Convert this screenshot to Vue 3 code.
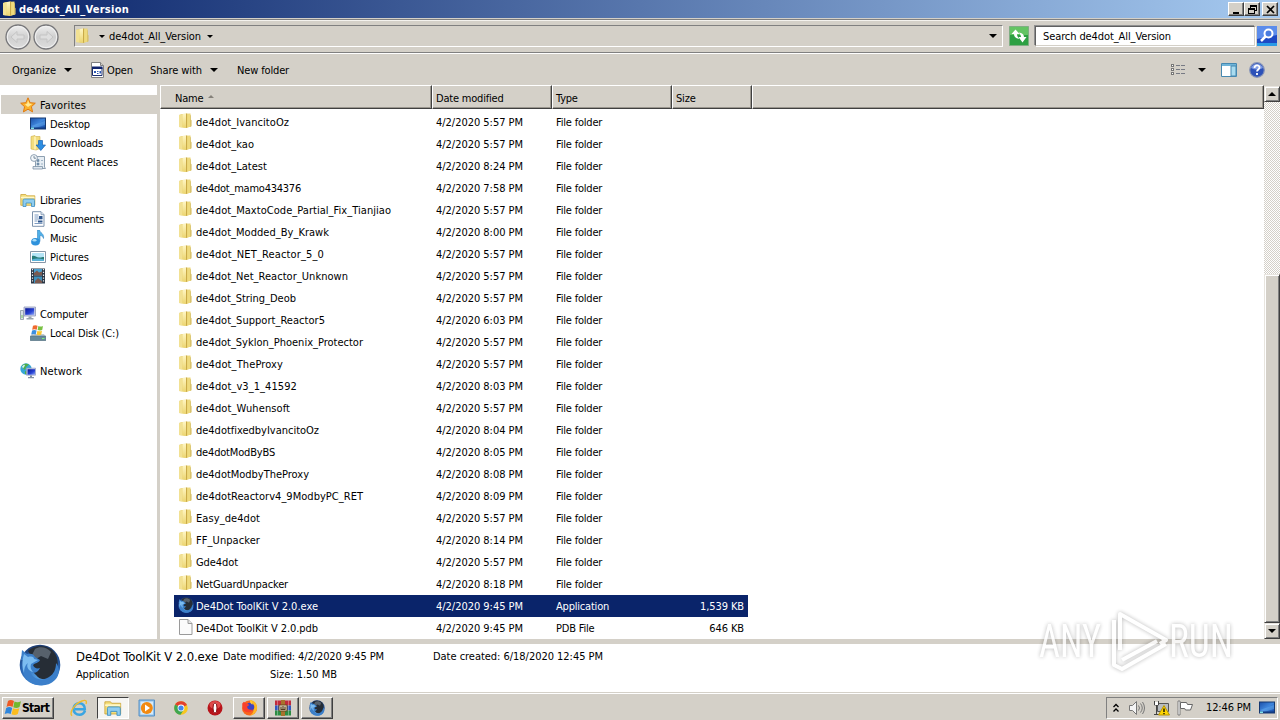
<template>
  <svg class="sprite" width="0" height="0">
    <defs>
      <linearGradient id="gBlue" x1="0" y1="0" x2="1" y2="1">
        <stop offset="0" stop-color="#1b4fa8" />
        <stop offset="0.5" stop-color="#3f86dc" />
        <stop offset="1" stop-color="#0d3f9c" />
      </linearGradient>
      <linearGradient id="gScreen" x1="0" y1="0" x2="1" y2="1">
        <stop offset="0" stop-color="#0a1590" />
        <stop offset="0.6" stop-color="#2743d6" />
        <stop offset="1" stop-color="#8ea6f4" />
      </linearGradient>
      <linearGradient id="gNav" x1="0" y1="0" x2="0" y2="1">
        <stop offset="0" stop-color="#f0f0f0" />
        <stop offset="0.5" stop-color="#cfcfcf" />
        <stop offset="1" stop-color="#dedede" />
      </linearGradient>
      <linearGradient id="gLeaf" x1="0" y1="0" x2="0" y2="1">
        <stop offset="0" stop-color="#fff6c4" />
        <stop offset="1" stop-color="#ecd570" />
      </linearGradient>
      <radialGradient id="gFox" cx="0.5" cy="0.8" r="0.8">
        <stop offset="0" stop-color="#5aa5e6" />
        <stop offset="0.6" stop-color="#2a66b4" />
        <stop offset="1" stop-color="#1b3a70" />
      </radialGradient>
    </defs>
    <symbol id="folder" viewBox="0 0 16 16">
      <path d="M1 2l3-1 8.500-.5 .5 13-5 1.500-7-1z" fill="#e8d271" />
      <path d="M1 2l3.500-.8v13.300l-3.500-.6z" fill="#f2e193" />
      <path d="M4.500 1.200l3.500-.6v14.200l-3.500-.6z" fill="url(#gLeaf)" />
      <path d="M8 .6l1.200 0v14l-1.200.4z" fill="#c9aa48" />
      <path d="M9.200 1h2.800v12.500l-2.800 1.100z" fill="#efda7c" />
      <path d="M12 2l.8.5v4l.8.700v6l-1.600.8z" fill="#d9c26b" />
    </symbol>
    <symbol id="star" viewBox="0 0 16 16">
      <path d="M8 .8l2.100 4.900 5.200.5-3.900 3.500 1.200 5.200L8 12.200l-4.600 2.700 1.200-5.200L.7 6.200l5.200-.5z" fill="#fcb22c" stroke="#e07a10" />
      <path d="M8 3l1.200 3.500 3 .4-4.200 3-3-2.500 2.200-.8z" fill="#ffe996" />
    </symbol>
    <symbol id="desktop" viewBox="0 0 16 16">
      <rect x=".5" y="2" width="15" height="11" fill="url(#gBlue)" stroke="#153870" />
      <path d="M1 10l14-5v4L5 12z" fill="#64a9ee" opacity=".5" />
      <path d="M1 11.500h14v1.500H1z" fill="#123a80" />
      <path d="M1 11.500h3v1.500H1z" fill="#7ee0e8" />
    </symbol>
    <symbol id="downloads" viewBox="0 0 16 16">
      <path d="M1 1.500l4-1v1h5v12l-4 1.500-5-1z" fill="#f3dd7e" stroke="#cfae48" stroke-width=".6" />
      <path d="M5 1.500v13" stroke="#fff4bd" stroke-width="1.500" />
      <path d="M8.500 5.500h4v4.500H15.500L10.800 15.500 6 10h2.500z" fill="#2d8ee2" stroke="#1b62b0" stroke-width=".7" />
    </symbol>
    <symbol id="recent" viewBox="0 0 16 16">
      <path d="M5.500 2.500h9v10.500l1 1.500h-10z" fill="#e6edf3" stroke="#8d9fb0" />
      <path d="M3 12.500h9.500v2.500H3z" fill="#dfe7ef" stroke="#7e93a6" stroke-width=".8" />
      <path d="M7 5.500h2v2H7zM7 9h2v2H7zM11 6.500h2M11 10h2" fill="#6f8da8" stroke="#6f8da8" stroke-width=".6" />
      <circle cx="4" cy="4" r="3.400" fill="#f4f8fb" stroke="#8fa1b2" />
      <path d="M4 2v2.200h2" fill="none" stroke="#5b7288" stroke-width=".8" />
    </symbol>
    <symbol id="libraries" viewBox="0 0 16 16">
      <path d="M.8 2.500h5l1 1.300h8v9.500H.8z" fill="#f5df7c" stroke="#cda63c" stroke-width=".8" />
      <path d="M1 5.500h13.500" stroke="#fff7c8" stroke-width="1.500" />
      <path d="M3 8.500c0-1 .5-1.500 1.500-1.500h8.500c1 0 1.500.5 1.500 1.500v6h-3v-3.500h-5.500v3.500H3z" fill="#8fcdf0" stroke="#3c8ec2" stroke-width=".8" />
    </symbol>
    <symbol id="documents" viewBox="0 0 16 16">
      <path d="M2.500.7h8.500l3 3v11.600H2.500z" fill="#fff" stroke="#7d93ad" />
      <path d="M11 .7v3h3" fill="#dce6f0" stroke="#7d93ad" stroke-width=".8" />
      <path d="M4.500 4h4M4.500 6h4M4.500 8h8M4.500 10h3M4.500 12.500h8" stroke="#7e9cc2" />
      <path d="M9 5h3.500v3H9zM8 9.500h4.500v2H8z" fill="#2e568e" />
    </symbol>
    <symbol id="music" viewBox="0 0 16 16">
      <path d="M7.500 0h2c.5 3 5 3.500 4 8.500-.8-2.500-2-3-3.500-3v6h-2.500z" fill="#4fb0e8" stroke="#2076b8" stroke-width=".5" />
      <ellipse cx="5.500" cy="11.800" rx="4.400" ry="3.800" fill="#2f92dc" />
      <ellipse cx="4.500" cy="10.300" rx="2" ry="1.300" fill="#a9ddf8" />
    </symbol>
    <symbol id="pictures" viewBox="0 0 16 16">
      <path d="M.5 2.500h15v11H.5z" fill="#fff" stroke="#8797a8" />
      <path d="M2 4h12v8H2z" fill="#b4e4f6" />
      <path d="M2 7c3-1 4 1.500 7 1.500s3-.5 5-.5v4H2z" fill="#277c78" />
      <path d="M2 10.500c4-1.500 8-1 12 0V12H2z" fill="#5bb3d8" />
    </symbol>
    <symbol id="videos" viewBox="0 0 16 16">
      <path d="M1 .5h14v15H1z" fill="#2a3644" />
      <path d="M4 1h8v6.500H4z" fill="#4aa0cf" />
      <path d="M4 8.500h8V15H4z" fill="#3e91bd" />
      <path d="M4 5l3-2.500 2 2 3-1v4H4zM5 13l3-3 4 3v2H5z" fill="#7b5a50" />
      <path d="M2.500 1v14M13.500 1v14" stroke="#e7edf2" stroke-width="1.200" stroke-dasharray="1.300 1.500" />
    </symbol>
    <symbol id="computer" viewBox="0 0 16 16">
      <path d="M.5 4.500h3v9h-3z" fill="#d7e0e6" stroke="#8796a0" stroke-width=".8" />
      <path d="M1.500 9h1v3h-1z" fill="#7cc45c" />
      <path d="M4 1h11.500v9H4z" fill="#ccd2ea" stroke="#8f98b8" stroke-width=".8" />
      <path d="M5.200 2.200h9v6.600h-9z" fill="url(#gScreen)" />
      <path d="M8.500 10.400h3v1.600h2v1.500h-7V12h2z" fill="#98a3ad" />
    </symbol>
    <symbol id="disk" viewBox="0 0 16 16">
      <path d="M2 9h12l2 3.500v3H.3v-3z" fill="#c2ccd2" />
      <path d="M.3 11h15.500v4.500H.3z" fill="#66899a" stroke="#4d6b7c" stroke-width=".6" />
      <path d="M12 13h2.500v1H12z" fill="#7df07a" />
      <path d="M3 .8c1.700-1 3.200-.6 4.600 0L6.700 4.700c-1.600-.8-3.100-.7-4.500 0z" fill="#ef6a2f" />
      <path d="M8.400 1c1.700.7 3.200.7 4.600 0L12.200 4.900c-1.500.7-3 .6-4.600 0z" fill="#79c142" />
      <path d="M2.100 5.600c1.500-.8 3-.7 4.500 0L5.700 9.500c-1.500-.8-3-.7-4.500 0z" fill="#3b8fe0" />
      <path d="M7.400 5.800c1.500.7 3.100.7 4.600 0L11.200 9.700c-1.500.7-3 .6-4.600 0z" fill="#fbc62f" />
    </symbol>
    <symbol id="network" viewBox="0 0 16 16">
      <circle cx="6" cy="6" r="5.700" fill="#36a6d6" />
      <path d="M2 2.500c2-2 5-2.200 7-1L6 4 5 7 2.500 5zM5 8l3 1-1 2.500-2-.5z" fill="#4fae48" />
      <path d="M2 3.500l2-2 1 1-2 3z" fill="#c9f0fa" />
      <path d="M6.500 5.200h9v7h-9z" fill="#d6dcf2" stroke="#8b96bd" stroke-width=".7" />
      <path d="M7.500 6.200h7.500v5.500h-7.500z" fill="url(#gScreen)" />
      <path d="M10 12.500h2v1.500h2v1.300H8V14h2z" fill="#8290a2" />
    </symbol>
    <symbol id="page" viewBox="0 0 16 16">
      <path d="M1.500.5h8.500l4 4v11h-12.500z" fill="#fbfbfb" stroke="#9a9a9a" />
      <path d="M10 .5v4h4" fill="#e4e4e4" stroke="#9a9a9a" />
    </symbol>
    <symbol id="fox" viewBox="0 0 42 42">
      <circle cx="21" cy="21" r="20.300" fill="url(#gFox)" />
      <path d="M9 7C14 1 29 0 35 8c5 6 5 17 0 24-6 5-15 4-18-1-5-4-3-9-2-14z" fill="#262d36" />
      <path d="M16 5c5-3 12-2 16 3l-3 7-7-3-5 3-4-4z" fill="#57616c" />
      <path d="M2 16L3 6l5 4c4-1 7 0 8 3l5 3c-1 3-5 3-7 5 1 3 4 4 7 3-2 5-7 6-10 3 2 8 12 11 19 6 5-3 7-8 7-14 4 5 4 12-1 17-9 9-24 6-30-3-3-5-3-11 0-17z" fill="#3b7fca" />
      <path d="M4 14l1-4 4 3c4-1 6 0 6 2l4 1-7 4c-1 3 0 6 2 8-5-1-7-6-5-9-3 2-4 6-4 10-2-5-2-10-1-15z" fill="#7cbcf0" />
    </symbol>
    <symbol id="flag4" viewBox="0 0 18 18">
      <path d="M4 2c2-1.500 4-1 6 0L8.500 8c-2-1.200-4-1.200-6 0z" fill="#ee5a24" />
      <path d="M10.500 2.500c2 1 4 1 6.500-.3L15.500 8c-2 1.200-4 1.200-6.200.3z" fill="#72b82e" />
      <path d="M2.200 9c2-1.200 4-1.200 6 0L6.700 15c-2-1.200-4-1-6 0z" fill="#2f86dc" />
      <path d="M9 9.300c2 1 4.200 1 6.300 0L13.800 15c-2 1.200-4.200 1.200-6.300.2z" fill="#fbbc1e" />
    </symbol>
    <symbol id="ie" viewBox="0 0 18 18">
      <path d="M15 11.800c-1 2.500-3 4-5.500 4C6 15.800 3.500 13.300 3.500 10S6 4.200 9.300 4.200s5.700 2.500 5.500 6H5" fill="none" stroke="#39a5e2" stroke-width="2.600" />
      <path d="M2 16.800C-1 14 4 5 12 2c4-1.500 5 0 4 3" fill="none" stroke="#f0bb2c" stroke-width="1.400" />
    </symbol>
    <symbol id="media" viewBox="0 0 18 18">
      <path d="M1 1h15.500v16H1z" fill="#8fc0ea" stroke="#5790c4" />
      <path d="M2.500 2.500h12.500v13H2.500z" fill="#d6ebfa" />
      <circle cx="8.800" cy="9" r="6" fill="#f28a12" />
      <path d="M7 5.500l5 3.500-5 3.500z" fill="#fff" />
    </symbol>
    <symbol id="chrome" viewBox="0 0 18 18">
      <circle cx="9" cy="9" r="6.800" fill="#f7c61f" />
      <path d="M9 9L3.100 5.600A6.800 6.800 0 0 1 15 6z" fill="#e2402f" />
      <path d="M9 9L3.100 5.600A6.800 6.800 0 0 0 8.500 15.800L12 10.500z" fill="#3fa650" />
      <circle cx="9" cy="9" r="3.400" fill="#fff" />
      <circle cx="9" cy="9" r="2.600" fill="#4286ee" />
    </symbol>
    <symbol id="opera" viewBox="0 0 18 18">
      <ellipse cx="9" cy="9" rx="7.500" ry="7.500" fill="#b8141a" />
      <ellipse cx="9" cy="6" rx="5.500" ry="4" fill="#e04a4a" />
      <ellipse cx="9" cy="9" rx="2" ry="5.200" fill="#fff" stroke="#860c10" />
    </symbol>
    <symbol id="firefox" viewBox="0 0 18 18">
      <circle cx="9" cy="9.500" r="8" fill="#f9651e" />
      <path d="M9 1c5 0 8.500 4 8 9-.5 4-4 7.500-8 7.500 4-2 5-5 4-8z" fill="#fcb824" />
      <circle cx="9.500" cy="8.500" r="4.600" fill="#3c43c4" />
      <path d="M1.200 5L3 3l2 1.500c1.500 0 3 .5 3.500 2L6.500 8c0 3 3 4 6 3-1.500 3.500-7 4-10 1z" fill="#f8402c" />
      <path d="M10 1c2 1.500 2.500 3 2 5-2-1-3-3-2-5z" fill="#ffc83a" />
    </symbol>
    <symbol id="winrar" viewBox="0 0 18 18">
      <path d="M1 1.500h16v5H1z" fill="#c02a3c" />
      <path d="M1 6.500h16v5H1z" fill="#2f56c0" />
      <path d="M1 11.500h16v5H1z" fill="#2c8c42" />
      <path d="M7 1h4v16H7z" fill="#a9722c" />
      <path d="M5 6h8v6H5z" fill="#efe7d0" stroke="#6a4820" />
      <path d="M9 7v3M7 7.500v3h4v-3" stroke="#52391c" stroke-width="1.200" fill="none" />
      <path d="M3.500 1.500v15M14.500 1.500v15" stroke="#fff" opacity=".3" />
    </symbol>
    <symbol id="program" viewBox="0 0 16 16">
      <path d="M2.500.5h9l3 3v12h-12z" fill="#fff" stroke="#808080" />
      <path d="M11.500.5v3h3" fill="#d4d0c8" stroke="#808080" />
      <path d="M3.500 5.500h9.500v8h-9.500z" fill="#fff" stroke="#1a2d6e" />
      <path d="M3 4.500h10.500v2.500H3z" fill="#10246c" />
      <path d="M5 9h2v2H5zM8 9h1.500v1H8zM8 11h1.500v1H8zM10.500 9h1.500v2.500h-1.500z" fill="#2d59b2" />
    </symbol>
  </svg>

  <div class="window">
    <header class="titlebar">
      <svg class="icon"><use href="#folder" /></svg>
      <span v-fit="110" class="title">de4dot_All_Version</span>
      <div class="caption">
        <button class="cap">
          <svg width="9" height="9"><path d="M1 7h6v2H1z" /></svg>
        </button>
        <button class="cap">
          <svg width="9" height="9" fill="none" stroke="#000" shape-rendering="crispEdges">
            <path d="M2.500 3V.5h6v5H6.500M2 1.500h6M.5 3.500h6v5h-6zM0 4.500h6" />
          </svg>
        </button>
        <button class="cap close">
          <svg width="9" height="9"><path d="M1 1l7 7M8 1L1 8" stroke="#000" stroke-width="1.700" /></svg>
        </button>
      </div>
    </header>

    <div class="navbar">
      <svg class="arrows" width="58" height="28">
        <g v-for="x in [14, 42]" :key="x">
          <circle :cx="x" cy="14" r="12" fill="url(#gNav)" stroke="#77777a" stroke-width="1.300" />
          <circle :cx="x" cy="14" r="10.700" fill="none" stroke="#f2f2f2" />
        </g>
        <path d="M7 14l6-5.500v3.500h7v4h-7v3.500z" fill="#dedede" stroke="#c4c4c4" />
        <path d="M49 14l-6-5.500v3.500h-7v4h7v3.500z" fill="#dedede" stroke="#c4c4c4" />
      </svg>
      <div class="address">
        <svg class="icon"><use href="#folder" /></svg>
        <i class="tri small"></i>
        <span v-fit="92" class="crumb">de4dot_All_Version</span>
        <i class="tri small"></i>
        <i class="tri drop"></i>
      </div>
      <svg class="refresh" width="20" height="20">
        <path d="M.5.500h19v19H.5z" fill="#2ea043" stroke="#7fae83" />
        <path d="M1 1h18v8H1z" fill="#63c463" />
        <path d="M2.500 8l4-4.500 4 4.500H8c0 2 1 3.500 2.500 5C7 12.500 5 11 5 8z" fill="#fff" />
        <path d="M17.500 11l-4 5.500-4-5.500H12c0-1.500-.8-3-2.300-4.500 3.500.5 5.300 2 5.300 4.500z" fill="#fff" />
      </svg>
      <div class="search"><span v-fit="128">Search de4dot_All_Version</span></div>
      <svg class="lens" width="20" height="20">
        <path d="M0 0h20v20H0z" fill="#1d49c4" />
        <path d="M0 0h20v9L0 13z" fill="#5c8ceb" />
        <path d="M0 17h20v3H0z" fill="#2a9be6" />
        <circle cx="11.500" cy="7.500" r="4" fill="#4a7ce0" stroke="#fff" stroke-width="2" />
        <path d="M8.500 10.500L4 15" stroke="#fff" stroke-width="2.500" />
      </svg>
    </div>

    <div class="toolbar">
      <span class="tool organize"><span v-fit="44">Organize</span> <i class="tri"></i></span>
      <span class="tool open"><svg class="icon"><use href="#program" /></svg><span v-fit="26">Open</span></span>
      <span class="tool share"><span v-fit="52">Share with</span> <i class="tri"></i></span>
      <span class="tool"><span v-fit="52">New folder</span></span>
      <div class="views">
        <svg width="16" height="14" shape-rendering="crispEdges">
          <path d="M1.500 1.500h2v2h-2zM1.500 5.500h2v2h-2zM1.500 9.500h2v2h-2z" fill="#fff" stroke="#777" />
          <path d="M6 2.500h9M6 6.500h9M6 10.500h9" stroke="#777a84" stroke-dasharray="4 1" />
        </svg>
        <i class="tri"></i>
        <svg class="pane" width="16" height="14">
          <path d="M.5.500h15v13H.5z" fill="#fff" stroke="#4688b0" />
          <path d="M1 1h14v2H1z" fill="#6fb4d8" />
          <path d="M10 3h5v10h-5z" fill="#a9dcf0" stroke="#4688b0" />
        </svg>
        <svg class="help" width="16" height="16">
          <circle cx="8" cy="8" r="7.300" fill="#2d51b8" stroke="#8794b8" stroke-width="1.200" />
          <path d="M2 6a6.500 6.500 0 0 1 12 0c-4 2-8 2-12 0z" fill="#7f9be4" />
          <path d="M5.500 6c0-3.500 5-3.300 5-.5C10.500 7.500 8 7.400 8 9.600M8 11v2" fill="none" stroke="#fff" stroke-width="1.800" />
        </svg>
      </div>
    </div>

    <main class="content">
      <nav class="sidebar">
        <div
          v-for="(item, i) in places"
          :key="i"
          class="place"
          :class="{ child: item.child, active: item.active }"
        >
          <template v-if="item.label">
            <svg class="icon"><use :href="'#' + item.icon" /></svg>
            <span v-fit="item.width" class="label">{{ item.label }}</span>
          </template>
        </div>
      </nav>
      <section class="files">
        <div class="columns">
          <div class="col name">Name <i class="sort"></i></div>
          <div class="col">Date modified</div>
          <div class="col">Type</div>
          <div class="col size">Size</div>
          <div class="col rest"></div>
        </div>
        <div class="rows">
          <div v-for="file in files" :key="file.name" class="row" :class="{ selected: file.selected }">
            <svg class="icon"><use :href="'#' + file.icon" /></svg>
            <span class="fname"><span v-fit="file.width">{{ file.name }}</span></span>
            <span class="fdate"><span v-fit="87">4/2/2020 {{ file.time }} PM</span></span>
            <span class="ftype">{{ file.type }}</span>
            <span class="fsize">{{ file.size }}</span>
          </div>
        </div>
      </section>
      <div class="scrollbar">
        <div class="sbtn"><i class="tri up"></i></div>
        <div class="track"></div>
        <div class="thumb"></div>
        <div class="sbtn"><i class="tri"></i></div>
      </div>
    </main>

    <footer class="details">
      <svg class="big"><use href="#fox" /></svg>
      <div class="info">
        <div class="line">
          <span class="big-name"><span v-fit="142">De4Dot ToolKit V 2.0.exe</span></span>
          <span class="modified"><span v-fit="161">Date modified: 4/2/2020 9:45 PM</span></span>
          <span v-fit="170">Date created: 6/18/2020 12:45 PM</span>
        </div>
        <div class="line">
          <span class="kind">Application</span>
          <span v-fit="67">Size: 1.50 MB</span>
        </div>
      </div>
    </footer>

    <div class="taskbar">
      <button class="start"><svg width="18" height="18"><use href="#flag4" /></svg>Start</button>
      <div class="tasks">
        <div v-for="task in tasks" :key="task.icon" class="task" :class="task.state">
          <svg :width="task.size || 18" :height="task.size || 18"><use :href="'#' + task.icon" /></svg>
        </div>
      </div>
      <div class="tray">
        <svg width="8" height="10" fill="none" stroke="#000" stroke-width="1.300">
          <path d="M.5 4l2.500-2.500L5.500 4M.5 8.500L3 6l2.500 2.500" />
        </svg>
        <svg class="sound" width="18" height="16" fill="none" stroke="#777">
          <path d="M1.500 5.500h3L8.500 1.500v13l-4-4h-3z" fill="#f4f4f4" />
          <path d="M10.500 5.500q2 2.500 0 5M12.500 3.500q3.500 4.500 0 9M14.500 2q4 6 0 12" />
        </svg>
        <svg class="lan" width="17" height="16">
          <path d="M4.500 3.500h11v8h-11z" fill="#b8bcc0" stroke="#555" />
          <path d="M1.500 1v4h4V1M3.500 5v9M1 14.500h6" fill="none" stroke="#444" />
          <path d="M2 2h3v3H2z" fill="#fff" />
          <path d="M11 5.500l5.500 9.500h-11z" fill="#ffd500" stroke="#b89400" />
          <path d="M11 8.500v3.500M11 13v1.300" stroke="#000" stroke-width="1.300" />
        </svg>
        <svg class="flag" width="17" height="16">
          <path d="M1 1h2v14H1z" fill="#fff" stroke="#666" stroke-width=".8" />
          <path d="M3.500 2.500h6l1 2h5l-2 5.500h-5l-.8-1.500H3.500z" fill="#fff" stroke="#666" />
        </svg>
        <span class="clock"><span v-fit="45">12:46 PM</span></span>
        <svg class="icon"><use href="#desktop" /></svg>
      </div>
    </div>

    <svg class="watermark" width="206" height="72" viewBox="0 0 206 72">
      <g class="mark">
        <text x="5" y="53" textLength="62" lengthAdjust="spacingAndGlyphs">ANY</text>
        <text x="135" y="53" textLength="64" lengthAdjust="spacingAndGlyphs">RUN</text>
        <path d="M86 46V10l46 26-6 4M80 16v45l8 4 44-25" />
        <path d="M88 56l35-19" />
      </g>
    </svg>
  </div>
</template>

<script setup>
// spreads the letters so that a label takes up the given width
const vFit = {
  mounted(el, { value }) {
    if (!value) return;
    el.style.letterSpacing = "0px";
    const natural = el.getBoundingClientRect().width;
    el.style.letterSpacing = (value - natural) / el.textContent.length + "px";
  },
};

const places = [
  { label: "Favorites", icon: "star", active: true, width: 46 },
  { label: "Desktop", icon: "desktop", child: true, width: 40 },
  { label: "Downloads", icon: "downloads", child: true, width: 53 },
  { label: "Recent Places", icon: "recent", child: true, width: 68 },
  {},
  { label: "Libraries", icon: "libraries", width: 41 },
  { label: "Documents", icon: "documents", child: true, width: 54 },
  { label: "Music", icon: "music", child: true, width: 27 },
  { label: "Pictures", icon: "pictures", child: true, width: 39 },
  { label: "Videos", icon: "videos", child: true, width: 32 },
  {},
  { label: "Computer", icon: "computer", width: 48 },
  { label: "Local Disk (C:)", icon: "disk", child: true, width: 69 },
  {},
  { label: "Network", icon: "network", width: 42 },
];

const folders = [
  ["de4dot_IvancitoOz", "5:57", 93],
  ["de4dot_kao", "5:57", 58],
  ["de4dot_Latest", "8:24", 71],
  ["de4dot_mamo434376", "7:58", 105],
  ["de4dot_MaxtoCode_Partial_Fix_Tianjiao", "5:57", 195],
  ["de4dot_Modded_By_Krawk", "8:00", 133],
  ["de4dot_NET_Reactor_5_0", "5:57", 128],
  ["de4dot_Net_Reactor_Unknown", "5:57", 152],
  ["de4dot_String_Deob", "5:57", 100],
  ["de4dot_Support_Reactor5", "6:03", 129],
  ["de4dot_Syklon_Phoenix_Protector", "5:57", 167],
  ["de4dot_TheProxy", "5:57", 87],
  ["de4dot_v3_1_41592", "8:03", 101],
  ["de4dot_Wuhensoft", "5:57", 94],
  ["de4dotfixedbyIvancitoOz", "8:04", 123],
  ["de4dotModByBS", "8:05", 79],
  ["de4dotModbyTheProxy", "8:08", 113],
  ["de4dotReactorv4_9ModbyPC_RET", "8:09", 167],
  ["Easy_de4dot", "5:57", 64],
  ["FF_Unpacker", "8:14", 64],
  ["Gde4dot", "5:57", 42],
  ["NetGuardUnpacker", "8:18", 92],
];

const files = [
  ...folders.map(([name, time, width]) => ({ name, time, width, type: "File folder", icon: "folder" })),
  {
    name: "De4Dot ToolKit V 2.0.exe",
    time: "9:45",
    width: 122,
    type: "Application",
    size: "1,539 KB",
    icon: "fox",
    selected: true,
  },
  { name: "De4Dot ToolKit V 2.0.pdb", time: "9:45", width: 122, type: "PDB File", size: "646 KB", icon: "page" },
];

const tasks = [
  { icon: "ie" },
  { icon: "libraries", state: "pressed" },
  { icon: "media" },
  { icon: "chrome" },
  { icon: "opera" },
  { icon: "firefox", state: "raised", size: 17 },
  { icon: "winrar", state: "raised", size: 18 },
  { icon: "fox", state: "raised", size: 16 },
];
</script>

<style>
body {
  margin: 0;
  overflow: hidden;
}
</style>

<style scoped>
.sprite {
  position: absolute;
}

.window {
  width: 1280px;
  height: 720px;
  display: flex;
  flex-direction: column;
  background: #d4d0c8;
  color: #000;
  font-family: "DejaVu Sans Condensed", "DejaVu Sans", sans-serif;
  font-stretch: condensed;
  font-size: 11px;
  letter-spacing: -0.2px;
  white-space: nowrap;
  overflow: hidden;
}

svg {
  display: block;
  flex: none;
}

.icon {
  width: 16px;
  height: 16px;
}

.titlebar {
  height: 18px;
  display: flex;
  align-items: center;
  padding: 0 2px;
  background: linear-gradient(to right, #0a246a, #a6caf0);
}

.title {
  margin-left: 1px;
  color: #fff;
  font-weight: bold;
}

.caption {
  margin-left: auto;
  display: flex;
}

.cap {
  width: 16px;
  height: 14px;
  padding: 0;
  display: flex;
  align-items: center;
  justify-content: center;
  background: #d4d0c8;
  border: 1px solid;
  border-color: #fff #404040 #404040 #fff;
  box-shadow: inset -1px -1px #808080;
}

.close {
  margin-left: 2px;
}

.navbar {
  height: 32px;
  margin-top: 1px;
  display: flex;
  align-items: center;
  border-top: 1px solid #808080;
  border-bottom: 1px solid #808080;
  box-shadow: inset 0 1px #f4f2ee, 0 1px #fff;
  padding-left: 4px;
}

.arrows {
  margin-top: 2px;
}

.address {
  width: 927px;
  height: 20px;
  margin-left: 12px;
  display: flex;
  align-items: center;
  border: 1px solid;
  border-color: #808080 #fff #fff #808080;
}

.crumb {
  margin: 0 6px 0 4px;
}

.address .icon {
  margin-right: 8px;
}

.tri {
  display: inline-block;
  border: 4px solid transparent;
  border-top-color: #000;
  border-bottom: 0;
}

.tri.small {
  border-width: 3px 3px 0;
}

.tri.up {
  border-top: 0;
  border-bottom: 4px solid #000;
}

.tri.drop {
  margin-left: auto;
  margin-right: 5px;
}

.refresh {
  margin-left: 6px;
}

.search {
  width: 211px;
  height: 18px;
  margin-left: 6px;
  padding-left: 7px;
  line-height: 20px;
  background: #fff;
  border: 1px solid;
  border-color: #606060 #d4d0c8 #d4d0c8 #606060;
  box-shadow: -1px -1px #909090, 1px 1px #fff;
}

.lens {
  margin-left: 2px;
}

.toolbar {
  height: 31px;
  margin-top: 1px;
  display: flex;
  align-items: center;
  padding: 1px 15px 0 12px;
  box-sizing: border-box;
}

.tool {
  display: flex;
  align-items: center;
}

.organize {
  width: 77px;
}

.organize .tri,
.share .tri {
  margin-left: 8px;
}

.open {
  width: 61px;
}

.open .icon {
  margin-right: 2px;
}

.share {
  width: 87px;
}

.views {
  margin-left: auto;
  display: flex;
  align-items: center;
}

.views .tri {
  margin: 0 15px 0 12px;
}

.help {
  margin-left: 12px;
}

.content {
  height: 554px;
  display: flex;
}

.sidebar {
  width: 157px;
  padding-top: 10px;
  box-sizing: border-box;
  background: #fff;
}

.place {
  height: 19px;
  margin-left: 1px;
  padding-left: 19px;
  display: flex;
  align-items: center;
}

.place .icon {
  margin-right: 4px;
}

.label {
  padding-top: 1px;
}

.child {
  padding-left: 29px;
}

.active {
  background: #d4d0c8;
}

.files {
  width: 1104px;
  margin-left: 3px;
  background: #fff;
}

.columns {
  height: 24px;
  display: flex;
}

.col {
  width: 120px;
  box-sizing: border-box;
  padding: 2px 0 0 3px;
  display: flex;
  align-items: center;
  background: #d4d0c8;
  border: 1px solid;
  border-color: #fff #404040 #404040 #fff;
  box-shadow: inset -1px -1px #9a968e;
}

.col.name {
  width: 272px;
  padding-left: 14px;
}

.col.size {
  width: 80px;
}

.col.rest {
  width: 512px;
}

.sort {
  margin: -3px 0 0 5px;
  border: 3px solid transparent;
  border-top: 0;
  border-bottom-color: #85817a;
}

.rows {
  padding: 2px 0 0 14px;
}

.row {
  width: 574px;
  height: 22px;
  padding: 0 4px 0 4px;
  box-sizing: border-box;
  display: flex;
  align-items: center;
}

.row .icon {
  margin-top: -2px;
}

.row.selected {
  background: #0a246a;
  color: #fff;
}

.fname {
  width: 240px;
  margin-left: 2px;
}

.fdate {
  width: 120px;
}

.ftype {
  width: 100px;
}

.fsize {
  margin-left: auto;
  letter-spacing: -0.1px;
}

.scrollbar {
  width: 16px;
  display: flex;
  flex-direction: column;
  padding-top: 1px;
}

.sbtn {
  height: 16px;
  display: flex;
  align-items: center;
  justify-content: center;
}

.sbtn,
.thumb {
  box-sizing: border-box;
  background: #d4d0c8;
  border: 1px solid;
  border-color: #e8e5df #404040 #404040 #e8e5df;
  box-shadow: inset 1px 1px #fff, inset -1px -1px #808080;
}

.track {
  height: 172px;
  background: repeating-conic-gradient(#fff 0 25%, #d4d0c8 0 50%) 0 0 / 2px 2px;
}

.thumb {
  flex: 1;
}

.details {
  height: 48px;
  margin-top: 5px;
  display: flex;
  background: #fff;
}

.big {
  width: 42px;
  height: 42px;
  margin-left: 19px;
}

.info {
  margin-left: 15px;
  padding-top: 3px;
}

.line {
  height: 18px;
  display: flex;
  align-items: center;
}

.big-name {
  width: 147px;
  font-size: 13px;
}

.modified {
  width: 210px;
}

.kind {
  width: 194px;
}

.taskbar {
  height: 28px;
  display: flex;
  align-items: center;
  border-top: 1px solid #d4d0c8;
  box-shadow: inset 0 1px #fff;
  box-sizing: border-box;
  padding: 2px 0 0 2px;
}

.start {
  width: 52px;
  height: 22px;
  padding: 0 0 0 1px;
  display: flex;
  align-items: center;
  font: bold 12px "DejaVu Sans Condensed", sans-serif;
  letter-spacing: -0.7px;
  background: #d4d0c8;
  border: 1px solid;
  border-color: #fff #404040 #404040 #fff;
  box-shadow: inset -1px -1px #808080;
}

.tasks {
  margin-left: 9px;
  display: flex;
  gap: 2px;
}

.task {
  width: 32px;
  height: 22px;
  box-sizing: border-box;
  border: 1px solid transparent;
  display: flex;
  align-items: center;
  justify-content: center;
}

.raised {
  border-color: #fff #404040 #404040 #fff;
  box-shadow: inset -1px -1px #808080;
}

.pressed {
  background: #f6f5f2;
  border-color: #404040 #fff #fff #404040;
}

.tray {
  width: 172px;
  height: 22px;
  margin-left: auto;
  margin-right: 2px;
  padding: 0 2px 0 6px;
  box-sizing: border-box;
  display: flex;
  align-items: center;
  border: 1px solid;
  border-color: #808080 #fff #fff #808080;
}

.sound,
.lan,
.flag {
  margin-left: 7px;
}

.clock {
  width: 54px;
  margin-left: 12px;
  margin-right: 1px;
}

.watermark {
  position: absolute;
  left: 1034px;
  top: 604px;
  overflow: visible;
}

.mark {
  fill: none;
  stroke: #fff;
  stroke-width: 4px;
  stroke-linejoin: round;
  opacity: 0.8;
  filter: drop-shadow(0 0 2px rgba(0, 0, 0, 0.35));
}

.mark text {
  fill: #fff;
  stroke: none;
  font-family: Roboto, sans-serif;
  font-size: 46px;
  letter-spacing: 0;
}
</style>
